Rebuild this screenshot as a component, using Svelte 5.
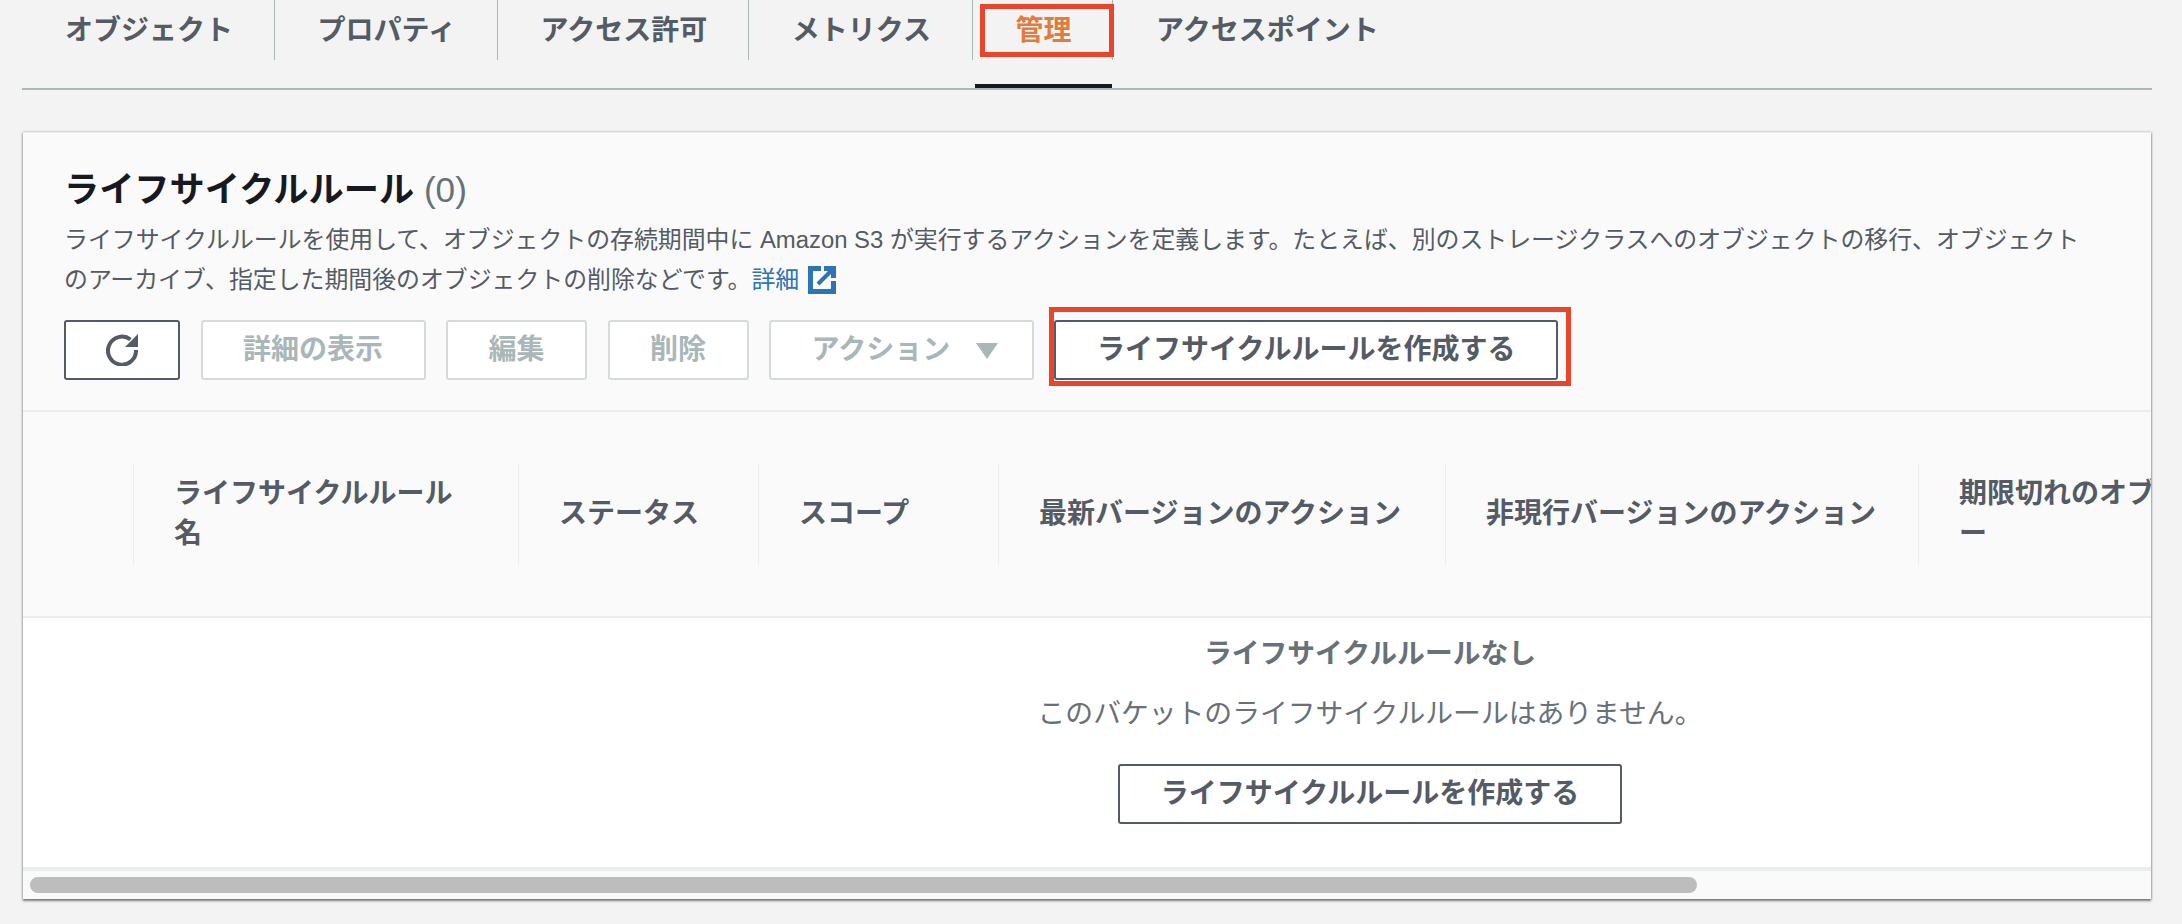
<script>
  const tabs = ['オブジェクト', 'プロパティ', 'アクセス許可', 'メトリクス', '管理', 'アクセスポイント'];
  const activeTab = '管理';
  const columns = [
    '',
    'ライフサイクルルール名',
    'ステータス',
    'スコープ',
    '最新バージョンのアクション',
    '非現行バージョンのアクション',
    '期限切れのオブジェクト削除マーカ\nー'
  ];
  const createLabel = 'ライフサイクルルールを作成する';
</script>

<div class="page">
  <ul class="tabs">
    {#each tabs as tab}
      <li class="tab" class:active={tab === activeTab}>
        <span class="tab-label">{tab}</span>
        {#if tab === activeTab}
          <span class="tab-mark"></span>
        {/if}
      </li>
    {/each}
  </ul>

  <section class="card">
    <header class="card-header">
      <h2>ライフサイクルルール <span class="count">(0)</span></h2>
      <p class="desc">
        ライフサイクルルールを使用して、オブジェクトの存続期間中に Amazon S3 が実行するアクションを定義します。たとえば、別のストレージクラスへのオブジェクトの移行、オブジェクトのアーカイブ、指定した期間後のオブジェクトの削除などです。<a href="#details" class="link">詳細
          <svg class="ext" viewBox="0 0 28 28" aria-hidden="true">
            <path d="M13 2.5H2.5V25.5H25.5V15" fill="none" stroke="currentColor" stroke-width="5" />
            <path d="M10 18L23 5" fill="none" stroke="currentColor" stroke-width="4" />
            <path d="M16 2.5H25.5V12" fill="none" stroke="currentColor" stroke-width="5" />
          </svg>
        </a>
      </p>
      <div class="actions">
        <button class="btn refresh" aria-label="更新">
          <svg viewBox="0 0 32 32" aria-hidden="true">
            <path d="M24.5 5.5A14 14 0 1 0 30 16" fill="none" stroke="currentColor" stroke-width="4" />
            <polygon points="32,0 32,13 19,13" fill="currentColor" />
          </svg>
        </button>
        <button class="btn disabled">詳細の表示</button>
        <button class="btn disabled">編集</button>
        <button class="btn disabled">削除</button>
        <button class="btn disabled action">
          アクション
          <svg class="caret" viewBox="0 0 22 16" aria-hidden="true"><polygon points="0,0 22,0 11,16" fill="currentColor" /></svg>
        </button>
        <button class="btn marked">{createLabel}</button>
      </div>
    </header>

    <div class="table-wrap">
      <table>
        <thead>
          <tr>
            {#each columns as col}
              <th><div class="th-inner">{col}</div></th>
            {/each}
          </tr>
        </thead>
        <tbody>
          <tr>
            <td colspan={columns.length}>
              <div class="empty-title">ライフサイクルルールなし</div>
              <p class="empty-text">このバケットのライフサイクルルールはありません。</p>
              <button class="btn">{createLabel}</button>
            </td>
          </tr>
        </tbody>
      </table>
    </div>

    <div class="scrollbar"><div class="thumb"></div></div>
  </section>
</div>

<style>
  :global(body) {
    margin: 0;
    background: #f3f3f3;
  }

  .page {
    width: 2182px;
    height: 924px;
    box-sizing: border-box;
    padding: 0 30px 0 22px;
    overflow: hidden;
    font-family: "Liberation Sans", "Noto Sans CJK JP", sans-serif;
    color: #545b64;
  }

  .tabs {
    display: flex;
    height: 88px;
    margin: 0;
    padding: 0;
    list-style: none;
    border-bottom: 2px solid #aab7b8;
  }

  .tab {
    position: relative;
    height: 60px;
    box-sizing: border-box;
    padding: 0 40.6px 4px 43px;
    border-right: 1px solid #aab7b8;
    display: flex;
    align-items: center;
    font-size: 28px;
    font-weight: 700;
    white-space: nowrap;
  }

  .tab:last-child {
    border-right: 0;
  }

  .tab.active {
    color: #e07c3c;
  }

  .tab.active::after {
    content: '';
    position: absolute;
    left: 2px;
    right: 0;
    top: 84px;
    height: 4px;
    background: #16191f;
  }

  .tab-mark {
    position: absolute;
    left: 7px;
    right: -2px;
    top: 4px;
    height: 53px;
    box-sizing: border-box;
    border: 5px solid #e8452a;
  }

  .card {
    margin: 42px 0 0 1px;
    width: 2128px;
    height: 766px;
    display: flex;
    flex-direction: column;
    background: #fafafa;
    border-top: 1px solid #eaeded;
    box-shadow: 0 2px 2px rgba(84, 91, 100, 0.75), 1px 0 2px rgba(84, 91, 100, 0.3), -1px 0 2px rgba(84, 91, 100, 0.25);
    overflow: hidden;
  }

  .card-header {
    height: 279px;
    box-sizing: border-box;
    padding: 33px 60px 0 41px;
    border-bottom: 2px solid #eaeded;
  }

  h2 {
    margin: 0;
    height: 48px;
    line-height: 48px;
    font-size: 35.2px;
    font-weight: 700;
    color: #16191f;
  }

  .count {
    font-weight: 400;
    color: #687078;
  }

  .desc {
    margin: 6px 6px 0 0;
    font-size: 23.88px;
    line-height: 40px;
  }

  .link {
    color: #2f73b5;
    text-decoration: none;
  }

  .ext {
    width: 28px;
    height: 28px;
    vertical-align: -6px;
    margin-left: 2px;
  }

  .actions {
    display: flex;
    gap: 20.5px;
    margin-top: 20px;
  }

  .btn {
    height: 60px;
    box-sizing: border-box;
    padding: 0 40.5px;
    border: 2px solid #545b64;
    border-radius: 3px;
    background: #fff;
    color: #545b64;
    font: inherit;
    font-size: 28px;
    font-weight: 700;
    line-height: 1;
    white-space: nowrap;
  }

  .btn.disabled {
    border-color: #d5dbdb;
    color: #aab7b8;
  }

  .action {
    padding-right: 34px;
  }

  .refresh {
    width: 116px;
    padding: 0;
    display: flex;
    align-items: center;
    justify-content: center;
  }

  .refresh svg {
    width: 32px;
    height: 32px;
  }

  .caret {
    width: 22px;
    height: 16px;
    margin-left: 18px;
  }

  .marked {
    position: relative;
  }

  .marked::after {
    content: '';
    position: absolute;
    left: -7px;
    right: -15px;
    top: -15px;
    bottom: -8px;
    border: 5px solid #e8452a;
  }

  .table-wrap {
    flex: 1;
    overflow: hidden;
  }

  table {
    width: 2694px;
    table-layout: fixed;
    border-collapse: collapse;
  }

  th {
    height: 204px;
    padding: 0;
    border-bottom: 2px solid #eaeded;
    background: #fafafa;
    text-align: left;
    font-size: 28px;
    font-weight: 700;
    line-height: 40px;
  }

  th:nth-child(1) { width: 110px; }
  th:nth-child(2) { width: 385px; }
  th:nth-child(3) { width: 240px; }
  th:nth-child(4) { width: 240px; }
  th:nth-child(5) { width: 447px; }
  th:nth-child(6) { width: 473px; }

  .th-inner {
    height: 101px;
    box-sizing: border-box;
    padding: 0 40px;
    display: flex;
    align-items: center;
    white-space: pre-line;
    border-left: 1px solid #eaeded;
  }

  th:first-child .th-inner {
    border-left: 0;
  }

  td {
    height: 250px;
    padding: 0;
    background: #fff;
    text-align: center;
    vertical-align: top;
  }

  .empty-title {
    margin-top: 18px;
    font-size: 27.8px;
    font-weight: 700;
    line-height: 36px;
    color: #687078;
  }

  .empty-text {
    margin: 22px 0 30px;
    font-size: 27.8px;
    line-height: 40px;
    color: #687078;
  }

  .scrollbar {
    height: 32px;
    box-sizing: border-box;
    padding: 6px 0 0 7px;
    border-top: 4px solid #eaeded;
  }

  .thumb {
    width: 1667px;
    height: 16px;
    border-radius: 8px;
    background: #bdbdbd;
  }
</style>
